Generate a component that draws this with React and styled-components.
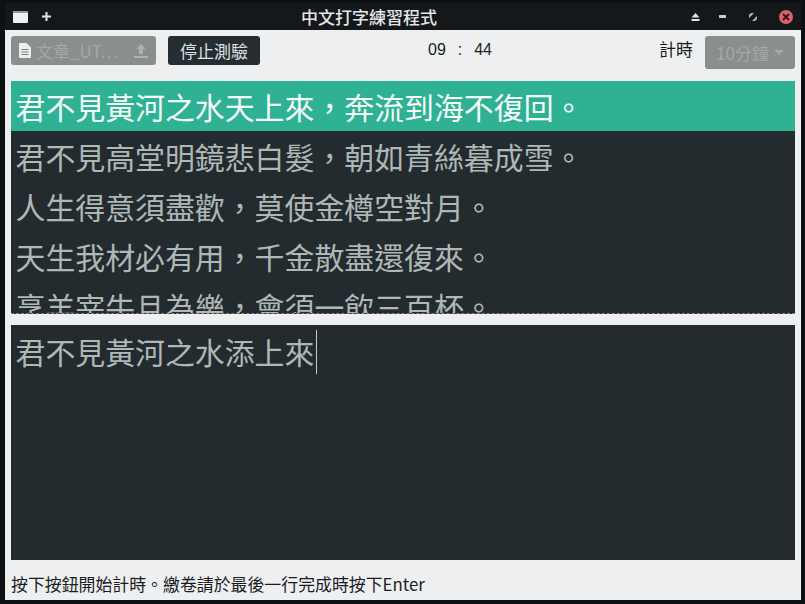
import React from 'react';
import styled, { createGlobalStyle } from 'styled-components';

const GlobalStyle = createGlobalStyle`
  html, body {
    margin: 0;
    padding: 0;
    background: #0d1012;
  }
  body {
    font-family: "Noto Sans CJK TC", "Noto Sans", sans-serif;
  }
`;

const Desktop = styled.div`
  width: 805px;
  height: 604px;
  overflow: hidden;
  background: #0d1012;
  padding: 3px 4px 0 5px;
  box-sizing: border-box;
`;

const Frame = styled.div`
  display: flex;
  flex-direction: column;
  height: 597px;
`;

const TitleBar = styled.div`
  height: 27px;
  flex: none;
  display: flex;
  align-items: center;
  position: relative;
  background: #14181b;
  color: #e4e6e6;
  padding: 0 0 0 8px;
`;

const TitleIcons = styled.div`
  display: flex;
  align-items: center;
  gap: 14px;
`;

const Title = styled.div`
  position: absolute;
  left: 0;
  right: 68px;
  text-align: center;
  font-size: 17px;
  font-weight: 500;
  line-height: 27px;
`;

const WindowButtons = styled.div`
  margin-left: auto;
  display: flex;
  align-items: center;
  padding-right: 8px;
`;

const ButtonSlot = styled.div`
  display: flex;
  margin-right: ${p => p.$gap || 0}px;
`;

const CloseButton = styled.div`
  width: 14px;
  height: 14px;
  border-radius: 50%;
  background: #d9626b;
  display: flex;
  align-items: center;
  justify-content: center;
`;

const Body = styled.div`
  flex: 1;
  display: flex;
  flex-direction: column;
  background: #eeeff0;
  padding: 6px 6px 0 6px;
  min-height: 0;
`;

const Toolbar = styled.div`
  height: 45px;
  flex: none;
  display: flex;
  align-items: flex-start;
`;

const FileButton = styled.div`
  width: 145px;
  height: 29px;
  box-sizing: border-box;
  background: #898e8e;
  border-radius: 3px;
  display: flex;
  align-items: center;
  padding: 0 8px 0 8px;
  color: #a3a8a8;
  font-size: 17px;
`;

const FileName = styled.span`
  margin-left: 5px;
  flex: 1;
  white-space: nowrap;
`;

const StopButton = styled.div`
  margin-left: 12px;
  width: 92px;
  height: 29px;
  background: #262d32;
  border-radius: 3px;
  color: #dfe3e3;
  font-size: 17px;
  line-height: 29px;
  text-align: center;
`;

const Timer = styled.div`
  margin-left: 168px;
  width: 64px;
  display: flex;
  justify-content: space-between;
  font-family: "Liberation Sans", sans-serif;
  font-size: 16px;
  line-height: 28px;
  color: #1b1e20;
`;

const TimerLabel = styled.div`
  margin-left: auto;
  font-size: 17px;
  line-height: 25px;
  color: #15181a;
`;

const Dropdown = styled.div`
  margin-left: 12px;
  width: 90px;
  height: 33px;
  background: #898e8e;
  border-radius: 3px;
  color: #a3a8a8;
  font-size: 17px;
  display: flex;
  align-items: center;
  justify-content: center;
  gap: 5px;
`;

const Caret = styled.span`
  width: 0;
  height: 0;
  border-left: 5px solid transparent;
  border-right: 5px solid transparent;
  border-top: 5px solid #a3a8a8;
`;

const Lines = styled.div`
  height: 233px;
  flex: none;
  overflow: hidden;
  background: #232b2f;
  border-bottom: 1px dashed #7d8486;
  box-sizing: border-box;
`;

const Line = styled.div`
  height: 50px;
  line-height: 50px;
  padding-left: 4.5px;
  font-size: 29.9px;
  white-space: nowrap;
  color: ${p => (p.$active ? '#f4fbf9' : '#aeb8b6')};
  background: ${p => (p.$active ? '#2fb194' : 'transparent')};
`;

const Input = styled.div`
  margin-top: 11px;
  height: 235px;
  flex: none;
  background: #232b2f;
  color: #aeb8b6;
  font-size: 29.9px;
  line-height: 52px;
  padding: 0 4.5px;
  box-sizing: border-box;
  display: flex;
  align-items: flex-start;
  white-space: nowrap;
`;

const Cursor = styled.span`
  width: 1px;
  height: 44px;
  margin-top: 5px;
  margin-left: 2px;
  background: #c4cbca;
`;

const Status = styled.div`
  flex: 1;
  font-size: 16.9px;
  line-height: 20px;
  padding-top: 14px;
  color: #1a1d1f;
  white-space: nowrap;
`;

const poem = [
  '君不見黃河之水天上來,奔流到海不復回。',
  '君不見高堂明鏡悲白髮,朝如青絲暮成雪。',
  '人生得意須盡歡,莫使金樽空對月。',
  '天生我材必有用,千金散盡還復來。',
  '烹羊宰牛且為樂,會須一飲三百杯。'
].map(s => s.replace(',', '\uFF0C'));

const WindowIcon = () => (
  <svg width="15" height="12" viewBox="0 0 15 12">
    <rect x="0" y="0" width="15" height="12" rx="1" fill="#eef0f2" />
    <rect x="0" y="0" width="15" height="2" fill="#8f98a6" />
  </svg>
);

const PlusIcon = () => (
  <svg width="9" height="9" viewBox="0 0 9 9">
    <path d="M3.5 0h2v3.5H9v2H5.5V9h-2V5.5H0v-2h3.5z" fill="#e4e6e6" />
  </svg>
);

const ShadeIcon = () => (
  <svg width="9" height="8" viewBox="0 0 9 8">
    <path d="M4.5 0 L8.5 4.5 H0.5 Z M0.5 6 H8.5 V8 H0.5 Z" fill="#dfe2e2" />
  </svg>
);

const MinIcon = () => (
  <svg width="7" height="3" viewBox="0 0 7 3">
    <rect width="7" height="3" rx="0.5" fill="#c9cccc" />
  </svg>
);

const MaxIcon = () => (
  <svg width="8" height="8" viewBox="0 0 8 8">
    <path d="M0 2 L2 0 H5 L0 5 Z M8 6 L6 8 H3 L8 3 Z" fill="#b4b8b8" />
  </svg>
);

const CloseIcon = () => (
  <svg width="8" height="8" viewBox="0 0 8 8">
    <path d="M1 1 L7 7 M7 1 L1 7" stroke="#3b1216" strokeWidth="1.8" />
  </svg>
);

const FileIcon = () => (
  <svg width="12" height="15" viewBox="0 0 12 15">
    <path d="M0 1 a1 1 0 0 1 1-1 H7.5 L12 4.5 V14 a1 1 0 0 1-1 1 H1 a1 1 0 0 1-1-1 Z" fill="#eceeee" />
    <path d="M2.5 6.5h7M2.5 9h7M2.5 11.5h7" stroke="#7d8282" strokeWidth="1" />
  </svg>
);

const UploadIcon = () => (
  <svg width="14" height="15" viewBox="0 0 14 15">
    <path d="M7 1 L11.5 6 H9 V11 H5 V6 H2.5 Z M0 13 H14 V15 H0 Z" fill="#aeb3b3" />
  </svg>
);

const App = () => (
  <Desktop>
    <GlobalStyle />
    <Frame>
      <TitleBar>
        <TitleIcons>
          <WindowIcon />
          <PlusIcon />
        </TitleIcons>
        <Title>中文打字練習程式</Title>
        <WindowButtons>
          <ButtonSlot $gap={19}><ShadeIcon /></ButtonSlot>
          <ButtonSlot $gap={23}><MinIcon /></ButtonSlot>
          <ButtonSlot $gap={22}><MaxIcon /></ButtonSlot>
          <ButtonSlot>
            <CloseButton>
              <CloseIcon />
            </CloseButton>
          </ButtonSlot>
        </WindowButtons>
      </TitleBar>
      <Body>
        <Toolbar>
          <FileButton>
            <FileIcon />
            <FileName>文章_UT⋯</FileName>
            <UploadIcon />
          </FileButton>
          <StopButton>停止測驗</StopButton>
          <Timer>
            <span>09</span>
            <span>:</span>
            <span>44</span>
          </Timer>
          <TimerLabel>計時</TimerLabel>
          <Dropdown>
            10分鐘
            <Caret />
          </Dropdown>
        </Toolbar>
        <Lines>
          {poem.map((text, i) => (
            <Line key={text} $active={i === 0}>
              {text}
            </Line>
          ))}
        </Lines>
        <Input>
          君不見黃河之水添上來
          <Cursor />
        </Input>
        <Status>按下按鈕開始計時。繳卷請於最後一行完成時按下Enter</Status>
      </Body>
    </Frame>
  </Desktop>
);

export default App;
